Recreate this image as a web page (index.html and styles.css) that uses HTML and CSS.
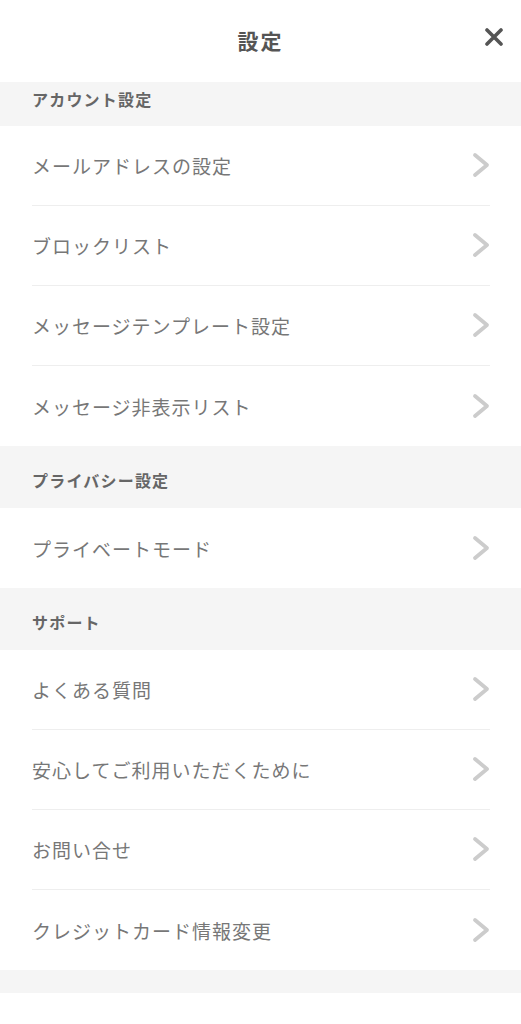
FILE: index.html
```html
<!DOCTYPE html>
<html lang="ja">

<head>
  <meta charset="utf-8">
  <title>設定</title>
  <link rel="stylesheet" href="styles.css">
</head>

<body>
  <header class="topbar">
    <h1 class="topbarTitle">設定</h1>
    <button class="closeButton" type="button" aria-label="閉じる">
      <svg width="18" height="18" viewBox="0 0 18 18">
        <path d="M2 2 L16 16 M16 2 L2 16" stroke="#555" stroke-width="3.6" stroke-linecap="round" fill="none" />
      </svg>
    </button>
  </header>

  <section class="group">
    <h2 class="groupTitle groupTitle--first">アカウント設定</h2>
    <ul class="menu">
      <li class="menuItem"><span>メールアドレスの設定</span><svg class="chevron" viewBox="0 0 18 26"><path d="M3 3 L15 13 L3 23" /></svg></li>
      <li class="menuItem"><span>ブロックリスト</span><svg class="chevron" viewBox="0 0 18 26"><path d="M3 3 L15 13 L3 23" /></svg></li>
      <li class="menuItem"><span>メッセージテンプレート設定</span><svg class="chevron" viewBox="0 0 18 26"><path d="M3 3 L15 13 L3 23" /></svg></li>
      <li class="menuItem"><span>メッセージ非表示リスト</span><svg class="chevron" viewBox="0 0 18 26"><path d="M3 3 L15 13 L3 23" /></svg></li>
    </ul>
  </section>

  <section class="group">
    <h2 class="groupTitle">プライバシー設定</h2>
    <ul class="menu">
      <li class="menuItem"><span>プライベートモード</span><svg class="chevron" viewBox="0 0 18 26"><path d="M3 3 L15 13 L3 23" /></svg></li>
    </ul>
  </section>

  <section class="group">
    <h2 class="groupTitle">サポート</h2>
    <ul class="menu">
      <li class="menuItem"><span>よくある質問</span><svg class="chevron" viewBox="0 0 18 26"><path d="M3 3 L15 13 L3 23" /></svg></li>
      <li class="menuItem"><span>安心してご利用いただくために</span><svg class="chevron" viewBox="0 0 18 26"><path d="M3 3 L15 13 L3 23" /></svg></li>
      <li class="menuItem"><span>お問い合せ</span><svg class="chevron" viewBox="0 0 18 26"><path d="M3 3 L15 13 L3 23" /></svg></li>
      <li class="menuItem"><span>クレジットカード情報変更</span><svg class="chevron" viewBox="0 0 18 26"><path d="M3 3 L15 13 L3 23" /></svg></li>
    </ul>
  </section>

  <div class="bottomGap"></div>
</body>

</html>
```

FILE: styles.css
```css
body {
  margin: 0;
  background: #ffffff;
  font-family: "Noto Sans CJK JP", "Noto Sans", sans-serif;
  color: #777777;
}

.topbar {
  height: 82px;
  box-sizing: border-box;
  padding-bottom: 3px;
  display: flex;
  align-items: center;
  justify-content: center;
  position: relative;
  background: #ffffff;
}

.topbarTitle {
  margin: 0;
  font-size: 21px;
  font-weight: bold;
  letter-spacing: 2px;
  color: #555555;
}

.closeButton {
  position: absolute;
  right: 18px;
  top: 28px;
  width: 18px;
  height: 18px;
  padding: 0;
  border: none;
  background: none;
  display: flex;
}

.groupTitle {
  margin: 0;
  padding: 26px 32px 19px;
  line-height: 17px;
  font-size: 16px;
  font-weight: bold;
  letter-spacing: 1.2px;
  color: #666666;
  background: #f5f5f5;
}

.groupTitle--first {
  padding-top: 9px;
  padding-bottom: 18px;
}

.menu {
  list-style: none;
  margin: 0;
  padding: 0;
}

.menuItem {
  height: 79px;
  margin: 0 31px 0 32px;
  display: flex;
  align-items: center;
  justify-content: space-between;
  border-bottom: 1px solid #eeeeee;
  font-size: 19px;
  letter-spacing: 1px;
}

.menuItem:last-child {
  height: 80px;
  border-bottom: none;
}

.chevron {
  width: 18px;
  height: 26px;
  margin-top: -1px;
}

.chevron path {
  fill: none;
  stroke: #cccccc;
  stroke-width: 3.8;
  stroke-linecap: round;
  stroke-linejoin: round;
}

.bottomGap {
  height: 23px;
  background: #f5f5f5;
}
```
